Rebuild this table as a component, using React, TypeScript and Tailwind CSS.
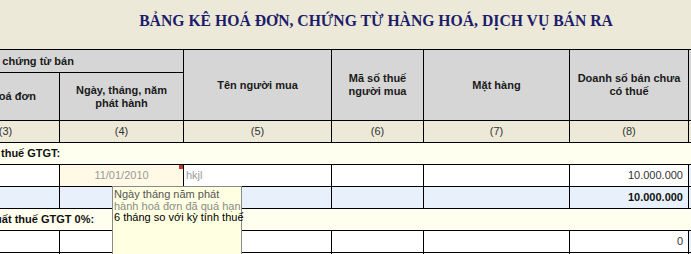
const numbered = ["(2)", "(3)", "(4)", "(5)", "(6)", "(7)", "(8)", "(9)"];

function EmptyRow({ tail }: { tail?: string }) {
  return (
    <tr className="h-[22px] bg-white">
      <td className="border border-black"></td>
      <td className="border border-black"></td>
      <td className="border border-black"></td>
      <td className="border border-black"></td>
      <td className="border border-black"></td>
      <td className="border border-black"></td>
      <td className="border border-black pr-[5px] text-right text-[#333]">{tail}</td>
      <td className="border border-black bg-[#E9F1FA]"></td>
    </tr>
  );
}

export default function App() {
  return (
    <div className="w-[691px] h-[254px] overflow-hidden bg-[#ECE9D8] font-['Liberation_Sans',Arial,sans-serif] text-[11px] text-[#222]">
      <h1 className="h-[49px] pl-[61px] pt-[10px] text-center font-['Liberation_Serif','Times_New_Roman',serif] text-[15.7px] font-bold leading-[22px] text-[#1c1c6b]">
        BẢNG KÊ HOÁ ĐƠN, CHỨNG TỪ HÀNG HOÁ, DỊCH VỤ BÁN RA
      </h1>
      <div className="relative">
        <table className="ml-[-159px] w-[947px] table-fixed border-collapse">
          <colgroup>
            <col className="w-[110px]" />
            <col className="w-[108px]" />
            <col className="w-[124px]" />
            <col className="w-[148px]" />
            <col className="w-[92px]" />
            <col className="w-[146px]" />
            <col className="w-[119px]" />
            <col className="w-[100px]" />
          </colgroup>
          <thead className="bg-[#D6D6D6] font-bold text-[#1a1a1a]">
            <tr className="h-[23px]">
              <th colSpan={3} className="border border-black text-center font-bold">
                Hoá đơn, chứng từ bán
              </th>
              <th rowSpan={2} className="border border-black">Tên người mua</th>
              <th rowSpan={2} className="border border-black leading-[13px]">
                Mã số thuế
                <br />
                người mua
              </th>
              <th rowSpan={2} className="border border-black">Mặt hàng</th>
              <th rowSpan={2} className="border border-black leading-[13px]">
                Doanh số bán chưa
                <br />
                có thuế
              </th>
              <th rowSpan={2} className="border border-black leading-[13px]">
                Thuế GTGT
              </th>
            </tr>
            <tr className="h-[48px]">
              <th className="border border-black">Ký hiệu hoá đơn</th>
              <th className="border border-black">Số hoá đơn</th>
              <th className="border border-black leading-[13px]">
                Ngày, tháng, năm
                <br />
                phát hành
              </th>
            </tr>
          </thead>
          <tbody>
            <tr className="h-[22px] bg-[#ECE9D8] text-[#333]">
              {numbered.map((n, i) => (
                <td key={i} className="border border-black text-center">
                  {n}
                </td>
              ))}
            </tr>
            <tr className="h-[22px] bg-[#FFFFEF]">
              <td colSpan={8} className="border border-black pl-[159px] font-bold text-[#111]">
                thuế GTGT:
              </td>
            </tr>
            <tr className="h-[22px] bg-white">
              <td className="border border-black"></td>
              <td className="border border-black"></td>
              <td className="relative border border-black bg-[#FFF9E6] text-center text-[#9a9a9a]">
                11/01/2010
                <span className="absolute right-0 top-0 h-[4px] w-[4px] bg-[#c0392b]" />
              </td>
              <td className="border border-black pl-[2px] text-[#9a9a9a]">hkjl</td>
              <td className="border border-black"></td>
              <td className="border border-black"></td>
              <td className="border border-black pr-[5px] text-right text-[#333]">10.000.000</td>
              <td className="border border-black bg-[#E9F1FA]"></td>
            </tr>
            <tr className="h-[22px] bg-[#E8F1FB]">
              <td className="border border-black"></td>
              <td className="border border-black"></td>
              <td className="border border-black"></td>
              <td className="border border-black"></td>
              <td className="border border-black"></td>
              <td className="border border-black"></td>
              <td className="border border-black pr-[5px] text-right font-bold text-[#111]">
                10.000.000
              </td>
              <td className="border border-black"></td>
            </tr>
            <tr className="h-[22px] bg-[#FFFFEF]">
              <td colSpan={8} className="border border-black pl-[159px] font-bold text-[#111]">
                <span className="ml-[-12px]">suất thuế GTGT 0%:</span>
              </td>
            </tr>
            <EmptyRow tail="0" />
            <EmptyRow />
          </tbody>
        </table>
        <div className="absolute left-[112px] top-[137px] h-[80px] w-[130px] whitespace-nowrap border border-[#8a8a8a] bg-[#FFFFE1] pl-[1px] pt-[2px] text-[11px] leading-[11.5px]">
          <div className="text-[#555]">Ngày tháng năm phát</div>
          <div className="text-[#8a8a8a]">hành hoá đơn đã quá hạn</div>
          <div className="text-black">6 tháng so với kỳ tính thuế</div>
        </div>
      </div>
    </div>
  );
}
